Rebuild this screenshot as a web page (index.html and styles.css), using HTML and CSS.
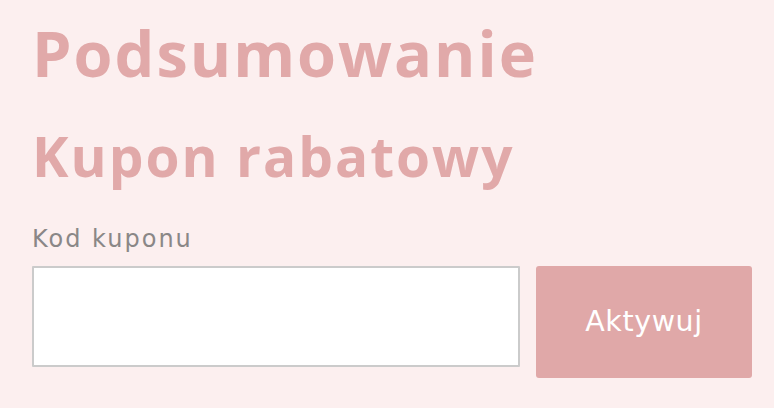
FILE: index.html
```html
<!DOCTYPE html>
<html lang="pl">
<head>
<meta charset="utf-8">
<title>Podsumowanie</title>
<link rel="stylesheet" href="styles.css">
</head>
<body>
<main class="summary">
  <h1 class="summary-title">Podsumowanie</h1>
  <h2 class="coupon-title">Kupon rabatowy</h2>
  <form class="coupon-form">
    <label class="coupon-label" for="coupon">Kod kuponu</label>
    <div class="coupon-row">
      <input class="coupon-input" id="coupon" type="text">
      <button class="coupon-button" type="button">Aktywuj</button>
    </div>
  </form>
</main>
</body>
</html>
```
FILE: styles.css
```css
html, body {
  margin: 0;
  padding: 0;
  background: #fcefef;
}
body {
  font-family: "Open Sans", "DejaVu Sans", sans-serif;
}
.summary {
  padding: 21px 22px 0 32px;
}
.summary-title {
  margin: 0;
  font-size: 63px;
  line-height: 1;
  font-weight: 700;
  letter-spacing: 2px;
  color: #e1a9a9;
}
.coupon-title {
  margin: 44px 0 0;
  font-size: 55px;
  line-height: 1;
  font-weight: 700;
  letter-spacing: 2px;
  color: #e1a9a9;
}
.coupon-form {
  margin-top: 44px;
}
.coupon-label {
  display: block;
  font-family: "DejaVu Sans", "Open Sans", sans-serif;
  font-size: 24px;
  line-height: 24px;
  font-weight: 400;
  letter-spacing: 2px;
  color: #8a8787;
}
.coupon-row {
  display: flex;
  align-items: flex-start;
  gap: 16px;
  margin-top: 15px;
}
.coupon-input {
  box-sizing: border-box;
  width: 488px;
  height: 101px;
  margin: 0;
  border: 2px solid #cbcbcb;
  border-radius: 1px;
  background: #fff;
}
.coupon-button {
  box-sizing: border-box;
  width: 216px;
  height: 112px;
  margin: 0;
  padding: 0;
  border: 0;
  border-radius: 3px;
  background: #e0a8a8;
  color: #fff;
  font-family: "DejaVu Sans", "Open Sans", sans-serif;
  font-size: 28.5px;
  line-height: 1;
  font-weight: 400;
  letter-spacing: 0.6px;
}
```
